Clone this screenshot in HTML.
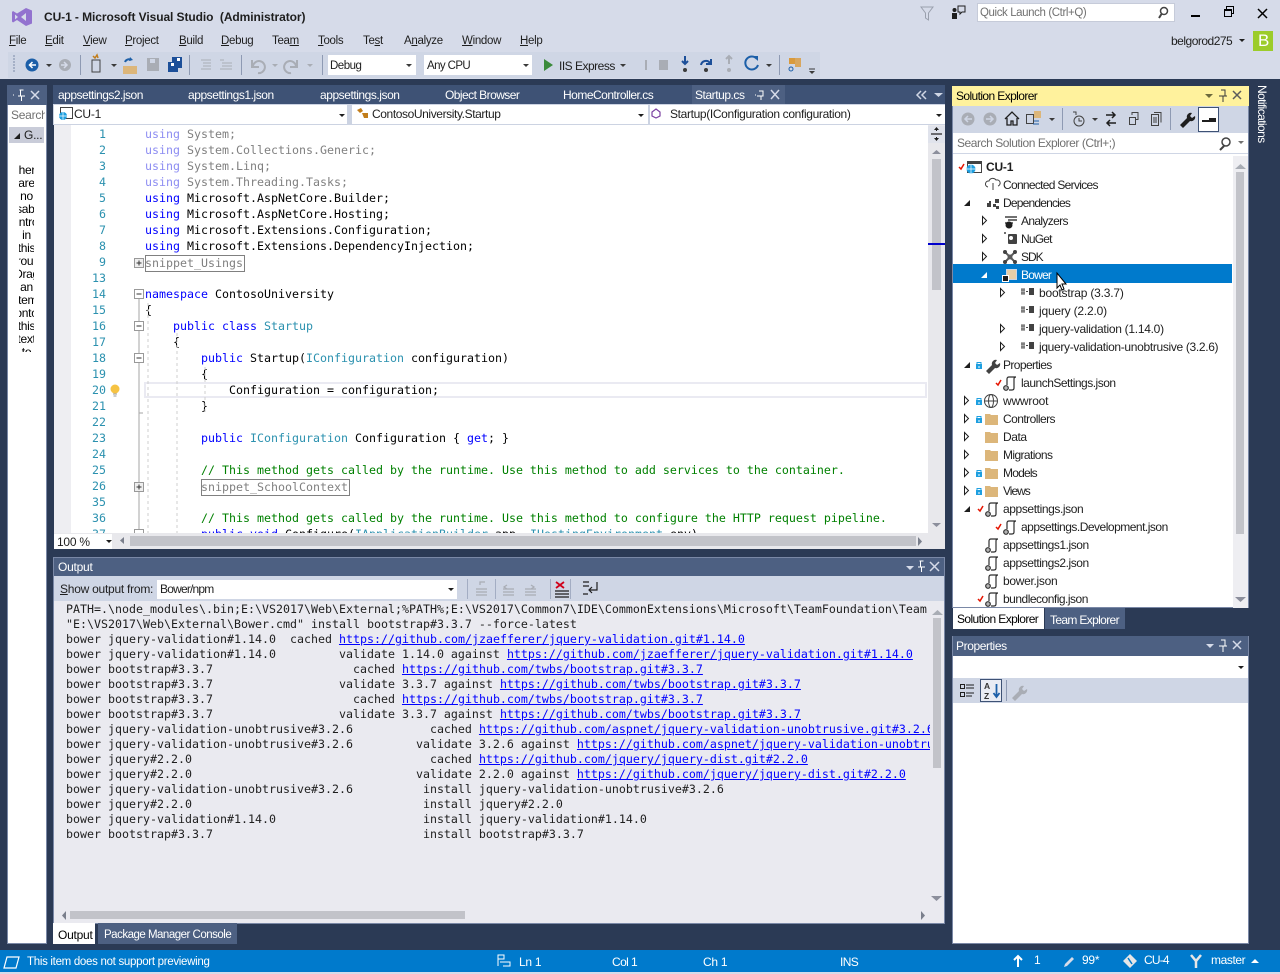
<!DOCTYPE html>
<html><head><meta charset="utf-8"><title>CU-1 - Microsoft Visual Studio</title>
<style>
html,body{margin:0;padding:0;width:1280px;height:974px;overflow:hidden;background:#2b3a55}
body{position:relative;font-family:"Liberation Sans",sans-serif;font-size:12px;color:#1e1e1e}
.b{position:absolute}
.t{position:absolute;white-space:pre;line-height:16px;letter-spacing:-.25px}
.m{position:absolute;white-space:pre;line-height:16px;font-size:11.5px;letter-spacing:-.3px;top:33px}
.w{color:#fff}
.c{position:absolute;left:91px;white-space:pre;font:11.63px/16px "DejaVu Sans Mono",monospace;color:#000}
.n{position:absolute;left:0;width:52px;text-align:right;font:11.63px/16px "DejaVu Sans Mono",monospace;color:#2b91af}
.k{color:#00f}.y{color:#2b91af}.g{color:#008000}
.fk{color:#8d8df2}.f{color:#808080}
#out{position:absolute;left:66px;top:602px;width:864px;height:300px;overflow:hidden;font:11.63px/15px "DejaVu Sans Mono",monospace;color:#1e1e1e;white-space:pre}
#out a{color:#00f;text-decoration:underline}
u{text-decoration:underline}
.r{position:absolute;white-space:pre;line-height:16px;letter-spacing:-.2px;color:#1e1e1e}
#lst{position:absolute;left:19px;top:164px;width:15px;height:188px;overflow:hidden}
#lst div{position:absolute;left:-23px;width:61px;text-align:center;line-height:13px;white-space:pre;font-size:12px;letter-spacing:-.3px;color:#000}
</style></head><body>

<!-- chrome -->
<div class="b" style="left:0;top:0;width:1280px;height:79px;background:#d6dbe9"></div>
<div class="b" style="left:8px;top:52px;width:812px;height:26px;background:#cfd6e5"></div>
<div class="b" style="left:977px;top:3px;width:198px;height:19px;background:#fff;border:1px solid #c6cbd9;box-sizing:border-box"></div>
<div class="b" style="left:1253px;top:31px;width:20px;height:20px;background:#9ccc2a"></div>
<div class="b" style="left:328px;top:55px;width:88px;height:20px;background:#fff"></div>
<div class="b" style="left:424px;top:55px;width:108px;height:20px;background:#fff"></div>

<!-- left panel -->
<div class="b" style="left:7px;top:85px;width:40px;height:859px;background:#fff;box-shadow:0 0 0 1px #7a88a6 inset"></div>
<div class="b" style="left:7px;top:85px;width:40px;height:20px;background:#4d6082"></div>
<div class="b" style="left:9px;top:127px;width:35px;height:16px;background:#c9ccd9"></div>

<!-- doc tabs -->
<div class="b" style="left:53px;top:85px;width:892px;height:19px;background:#3e5275"></div>
<div class="b" style="left:692px;top:85px;width:93px;height:19px;background:#4d6082"></div>
<div class="b" style="left:53px;top:104px;width:892px;height:21px;background:#ccd3e2"></div>
<div class="b" style="left:54px;top:105px;width:293px;height:19px;background:#fff"></div>
<div class="b" style="left:352px;top:105px;width:296px;height:19px;background:#fff"></div>
<div class="b" style="left:650px;top:105px;width:295px;height:19px;background:#fff"></div>

<!-- editor -->
<div class="b" style="left:54px;top:125px;width:891px;height:424px;background:#fff"></div>
<div class="b" style="left:54px;top:125px;width:17px;height:408px;background:#eeeef2"></div>
<div class="b" style="left:144px;top:382px;width:783px;height:16px;border:2px solid #eaeaf2;box-sizing:border-box"></div>
<div class="b" style="left:928px;top:125px;width:17px;height:408px;background:#e8e8ec"></div>
<div class="b" style="left:928px;top:126px;width:17px;height:17px;background:#e0e3ec"></div>
<div class="b" style="left:932px;top:159px;width:9px;height:131px;background:#c2c3c9"></div>
<div class="b" style="left:928px;top:243px;width:17px;height:2px;background:#00c"></div>

<div class="b" style="left:54px;top:125px;width:874px;height:408px;overflow:hidden">
<div class="n" style="top:1px">1</div><div class="n" style="top:17px">2</div><div class="n" style="top:33px">3</div><div class="n" style="top:49px">4</div><div class="n" style="top:65px">5</div><div class="n" style="top:81px">6</div><div class="n" style="top:97px">7</div><div class="n" style="top:113px">8</div><div class="n" style="top:129px">9</div><div class="n" style="top:145px">13</div><div class="n" style="top:161px">14</div><div class="n" style="top:177px">15</div><div class="n" style="top:193px">16</div><div class="n" style="top:209px">17</div><div class="n" style="top:225px">18</div><div class="n" style="top:241px">19</div><div class="n" style="top:257px">20</div><div class="n" style="top:273px">21</div><div class="n" style="top:289px">22</div><div class="n" style="top:305px">23</div><div class="n" style="top:321px">24</div><div class="n" style="top:337px">25</div><div class="n" style="top:353px">26</div><div class="n" style="top:369px">35</div><div class="n" style="top:385px">36</div><div class="n" style="top:401px">37</div>
<div class="c f" style="top:1px"><span class="fk">using</span> System;</div>
<div class="c f" style="top:17px"><span class="fk">using</span> System.Collections.Generic;</div>
<div class="c f" style="top:33px"><span class="fk">using</span> System.Linq;</div>
<div class="c f" style="top:49px"><span class="fk">using</span> System.Threading.Tasks;</div>
<div class="c" style="top:65px"><span class="k">using</span> Microsoft.AspNetCore.Builder;</div>
<div class="c" style="top:81px"><span class="k">using</span> Microsoft.AspNetCore.Hosting;</div>
<div class="c" style="top:97px"><span class="k">using</span> Microsoft.Extensions.Configuration;</div>
<div class="c" style="top:113px"><span class="k">using</span> Microsoft.Extensions.DependencyInjection;</div>
<div class="c f" style="top:130px">snippet_Usings</div>
<div class="c" style="top:161px"><span class="k">namespace</span> ContosoUniversity</div>
<div class="c" style="top:177px">{</div>
<div class="c" style="top:193px">    <span class="k">public</span> <span class="k">class</span> <span class="y">Startup</span></div>
<div class="c" style="top:209px">    {</div>
<div class="c" style="top:225px">        <span class="k">public</span> Startup(<span class="y">IConfiguration</span> configuration)</div>
<div class="c" style="top:241px">        {</div>
<div class="c" style="top:257px">            Configuration = configuration;</div>
<div class="c" style="top:273px">        }</div>
<div class="c" style="top:305px">        <span class="k">public</span> <span class="y">IConfiguration</span> Configuration { <span class="k">get</span>; }</div>
<div class="c g" style="top:337px">        // This method gets called by the runtime. Use this method to add services to the container.</div>
<div class="c f" style="top:354px">        snippet_SchoolContext</div>
<div class="c g" style="top:385px">        // This method gets called by the runtime. Use this method to configure the HTTP request pipeline.</div>
<div class="c" style="top:401px">        <span class="k">public</span> <span class="k">void</span> Configure(<span class="y">IApplicationBuilder</span> app, <span class="y">IHostingEnvironment</span> env)</div>
</div>
<div class="b" style="left:145px;top:255px;width:98px;height:15px;border:1px solid #808080"></div>
<div class="b" style="left:201px;top:479px;width:147px;height:15px;border:1px solid #808080"></div>

<!-- output -->
<div class="b" style="left:53px;top:557px;width:892px;height:367px;background:#eaeaf0;box-shadow:0 0 0 1px #7a88a6 inset"></div>
<div class="b" style="left:54px;top:558px;width:890px;height:18px;background:#4d6082"></div>
<div class="b" style="left:54px;top:576px;width:890px;height:25px;background:#cfd6e5"></div>
<div class="b" style="left:157px;top:580px;width:300px;height:19px;background:#fff"></div>
<div class="b" style="left:933px;top:618px;width:8px;height:150px;background:#c2c3c9"></div>
<div class="b" style="left:70px;top:911px;width:395px;height:8px;background:#c2c3c9"></div>
<div class="b" style="left:53px;top:923px;width:42px;height:21px;background:#fff"></div>
<div class="b" style="left:98px;top:923px;width:139px;height:21px;background:#4d6082"></div>
<div id="out">PATH=.\node_modules\.bin;E:\VS2017\Web\External;%PATH%;E:\VS2017\Common7\IDE\CommonExtensions\Microsoft\TeamFoundation\Team Explorer\Git\cmd
"E:\VS2017\Web\External\Bower.cmd" install bootstrap#3.3.7 --force-latest
bower jquery-validation#1.14.0  cached <a>https://github.com/jzaefferer/jquery-validation.git#1.14.0</a>
bower jquery-validation#1.14.0         validate 1.14.0 against <a>https://github.com/jzaefferer/jquery-validation.git#1.14.0</a>
bower bootstrap#3.3.7                    cached <a>https://github.com/twbs/bootstrap.git#3.3.7</a>
bower bootstrap#3.3.7                  validate 3.3.7 against <a>https://github.com/twbs/bootstrap.git#3.3.7</a>
bower bootstrap#3.3.7                    cached <a>https://github.com/twbs/bootstrap.git#3.3.7</a>
bower bootstrap#3.3.7                  validate 3.3.7 against <a>https://github.com/twbs/bootstrap.git#3.3.7</a>
bower jquery-validation-unobtrusive#3.2.6           cached <a>https://github.com/aspnet/jquery-validation-unobtrusive.git#3.2.6</a>
bower jquery-validation-unobtrusive#3.2.6         validate 3.2.6 against <a>https://github.com/aspnet/jquery-validation-unobtrusive.git#3.2.6</a>
bower jquery#2.2.0                                  cached <a>https://github.com/jquery/jquery-dist.git#2.2.0</a>
bower jquery#2.2.0                                validate 2.2.0 against <a>https://github.com/jquery/jquery-dist.git#2.2.0</a>
bower jquery-validation-unobtrusive#3.2.6          install jquery-validation-unobtrusive#3.2.6
bower jquery#2.2.0                                 install jquery#2.2.0
bower jquery-validation#1.14.0                     install jquery-validation#1.14.0
bower bootstrap#3.3.7                              install bootstrap#3.3.7</div>

<!-- editor bottom bar (above fold column) -->
<div class="b" style="left:54px;top:533px;width:891px;height:16px;background:#e8e8ec"></div>
<div class="b" style="left:54px;top:534px;width:58px;height:15px;background:#fff"></div>
<div class="b" style="left:130px;top:536px;width:786px;height:10px;background:#c2c3c9"></div>

<!-- solution explorer -->
<div class="b" style="left:952px;top:86px;width:297px;height:522px;background:#fff;box-shadow:0 0 0 1px #7a88a6 inset"></div>
<div class="b" style="left:952px;top:86px;width:297px;height:20px;background:#fff29d"></div>
<div class="b" style="left:953px;top:106px;width:295px;height:26px;background:#cfd6e5"></div>
<div class="b" style="left:1198px;top:107px;width:21px;height:25px;background:#fff;border:1px solid #3e5275;box-sizing:border-box"></div>
<div class="b" style="left:953px;top:132px;width:295px;height:1px;background:#cfd6e5"></div>
<div class="b" style="left:953px;top:133px;width:295px;height:20px;background:#fff;border-bottom:1px solid #cfd6e5"></div>
<div class="b" style="left:1233px;top:156px;width:15px;height:452px;background:#eeeef2"></div>
<div class="b" style="left:1236px;top:172px;width:8px;height:362px;background:#c2c3c9"></div>
<div class="b" style="left:953px;top:264px;width:279px;height:19px;background:#007acc"></div>
<div class="b" style="left:953px;top:608px;width:91px;height:21px;background:#fff"></div>
<div class="b" style="left:1045px;top:608px;width:80px;height:21px;background:#4d6082"></div>

<!-- properties -->
<div class="b" style="left:952px;top:636px;width:297px;height:308px;background:#fff;box-shadow:0 0 0 1px #7a88a6 inset"></div>
<div class="b" style="left:953px;top:636px;width:295px;height:20px;background:#4d6082"></div>
<div class="b" style="left:953px;top:678px;width:295px;height:25px;background:#cfd6e5"></div>
<div class="b" style="left:980px;top:679px;width:22px;height:23px;background:#e9ecf4;border:1px solid #3e5275;box-sizing:border-box"></div>

<!-- status -->
<div class="b" style="left:0;top:950px;width:1280px;height:22px;background:#007acc"></div>
<div class="b" style="left:0;top:972px;width:1280px;height:2px;background:#d6dbe9"></div>

<!-- title & menu text -->
<div class="t" style="left:44px;top:9px;font-weight:bold;color:#1e1e1e;font-size:12px;letter-spacing:-.08px">CU-1 - Microsoft Visual Studio  (Administrator)</div>
<div class="m" style="left:9px"><u>F</u>ile</div>
<div class="m" style="left:45px"><u>E</u>dit</div>
<div class="m" style="left:83px"><u>V</u>iew</div>
<div class="m" style="left:125px"><u>P</u>roject</div>
<div class="m" style="left:179px"><u>B</u>uild</div>
<div class="m" style="left:221px"><u>D</u>ebug</div>
<div class="m" style="left:272px">Tea<u>m</u></div>
<div class="m" style="left:318px"><u>T</u>ools</div>
<div class="m" style="left:363px">Te<u>s</u>t</div>
<div class="m" style="left:404px">A<u>n</u>alyze</div>
<div class="m" style="left:462px"><u>W</u>indow</div>
<div class="m" style="left:520px"><u>H</u>elp</div>
<div class="t" style="left:980px;top:5px;color:#717171;font-size:11.5px;letter-spacing:-.4px">Quick Launch (Ctrl+Q)</div>
<div class="t" style="left:1171px;top:33px;letter-spacing:-.5px">belgorod275</div>
<div class="t w" style="left:1258px;top:31px;font-size:17px;line-height:20px">B</div>
<div class="t" style="left:330px;top:58px;font-size:11.5px;letter-spacing:-.5px">Debug</div>
<div class="t" style="left:427px;top:58px;font-size:11.5px;letter-spacing:-.6px">Any CPU</div>
<div class="t" style="left:559px;top:58px;letter-spacing:-.5px">IIS Express</div>

<!-- left panel text -->
<div class="t" style="left:11px;top:107px;color:#717171;width:34px;overflow:hidden">Search</div>
<div class="t" style="left:24px;top:127px;color:#1e1e1e">G...</div>
<div id="lst">
<div style="top:0">There</div><div style="top:13px">are</div><div style="top:26px">no</div><div style="top:39px">usable</div><div style="top:52px">controls</div><div style="top:65px">in</div><div style="top:78px">this</div><div style="top:91px">group.</div><div style="top:104px">Drag</div><div style="top:117px">an</div><div style="top:130px">item</div><div style="top:143px">onto</div><div style="top:156px">this</div><div style="top:169px">text</div><div style="top:182px">to</div>
</div>

<!-- tabs text -->
<div class="t w" style="left:58px;top:87px;letter-spacing:-.5px">appsettings2.json</div>
<div class="t w" style="left:188px;top:87px;letter-spacing:-.45px">appsettings1.json</div>
<div class="t w" style="left:320px;top:87px;letter-spacing:-.45px">appsettings.json</div>
<div class="t w" style="left:445px;top:87px;letter-spacing:-.55px">Object Browser</div>
<div class="t w" style="left:563px;top:87px;letter-spacing:-.5px">HomeController.cs</div>
<div class="t w" style="left:695px;top:87px;letter-spacing:-.45px">Startup.cs</div>
<div class="t" style="left:74px;top:106px">CU-1</div>
<div class="t" style="left:372px;top:106px;letter-spacing:-.4px">ContosoUniversity.Startup</div>
<div class="t" style="left:670px;top:106px;letter-spacing:-.35px">Startup(IConfiguration configuration)</div>
<div class="t" style="left:57px;top:534px">100 %</div>

<!-- output chrome text -->
<div class="t w" style="left:58px;top:559px">Output</div>
<div class="t" style="left:60px;top:581px"><u>S</u>how output from:</div>
<div class="t" style="left:160px;top:581px;letter-spacing:-.8px">Bower/npm</div>
<div class="t" style="left:58px;top:927px;color:#000">Output</div>
<div class="t w" style="left:104px;top:927px;font-size:11.5px;letter-spacing:-.5px">Package Manager Console</div>

<!-- solution explorer text -->
<div class="t" style="left:956px;top:88px;color:#000;letter-spacing:-.6px">Solution Explorer</div>
<div class="t" style="left:957px;top:135px;color:#717171;letter-spacing:-.45px">Search Solution Explorer (Ctrl+;)</div>
<div class="r" style="left:986px;top:159px;font-weight:bold">CU-1</div>
<div class="r" style="left:1003px;top:177px;letter-spacing:-.7px">Connected Services</div>
<div class="r" style="left:1003px;top:195px;letter-spacing:-.8px">Dependencies</div>
<div class="r" style="left:1021px;top:213px;letter-spacing:-.65px">Analyzers</div>
<div class="r" style="left:1021px;top:231px;letter-spacing:-.8px">NuGet</div>
<div class="r" style="left:1021px;top:249px;letter-spacing:-1px">SDK</div>
<div class="r" style="left:1021px;top:267px;color:#fff;letter-spacing:-.8px">Bower</div>
<div class="r" style="left:1039px;top:285px">bootstrap (3.3.7)</div>
<div class="r" style="left:1039px;top:303px">jquery (2.2.0)</div>
<div class="r" style="left:1039px;top:321px;letter-spacing:-.28px">jquery-validation (1.14.0)</div>
<div class="r" style="left:1039px;top:339px;letter-spacing:-.33px">jquery-validation-unobtrusive (3.2.6)</div>
<div class="r" style="left:1003px;top:357px;letter-spacing:-.6px">Properties</div>
<div class="r" style="left:1021px;top:375px;letter-spacing:-.5px">launchSettings.json</div>
<div class="r" style="left:1003px;top:393px">wwwroot</div>
<div class="r" style="left:1003px;top:411px;letter-spacing:-.55px">Controllers</div>
<div class="r" style="left:1003px;top:429px;letter-spacing:-.45px">Data</div>
<div class="r" style="left:1003px;top:447px;letter-spacing:-.6px">Migrations</div>
<div class="r" style="left:1003px;top:465px;letter-spacing:-.8px">Models</div>
<div class="r" style="left:1003px;top:483px;letter-spacing:-1px">Views</div>
<div class="r" style="left:1003px;top:501px;letter-spacing:-.4px">appsettings.json</div>
<div class="r" style="left:1021px;top:519px;letter-spacing:-.5px">appsettings.Development.json</div>
<div class="r" style="left:1003px;top:537px;letter-spacing:-.45px">appsettings1.json</div>
<div class="r" style="left:1003px;top:555px;letter-spacing:-.45px">appsettings2.json</div>
<div class="r" style="left:1003px;top:573px;letter-spacing:-.3px">bower.json</div>
<div class="r" style="left:1003px;top:591px;letter-spacing:-.5px">bundleconfig.json</div>
<div class="t" style="left:957px;top:611px;color:#000;letter-spacing:-.6px">Solution Explorer</div>
<div class="t w" style="left:1050px;top:612px;letter-spacing:-.65px">Team Explorer</div>
<div class="t w" style="left:956px;top:638px;letter-spacing:-.4px">Properties</div>

<!-- notifications -->
<div class="b w" style="left:1254px;top:85px;writing-mode:vertical-rl;white-space:pre;line-height:16px;letter-spacing:-.6px">Notifications</div>

<!-- status text -->
<div class="t w" style="left:27px;top:954px;font-size:11.5px;letter-spacing:-.3px">This item does not support previewing</div>
<div class="t w" style="left:519px;top:954px">Ln 1</div>
<div class="t w" style="left:612px;top:954px;letter-spacing:-.6px">Col 1</div>
<div class="t w" style="left:703px;top:954px">Ch 1</div>
<div class="t w" style="left:840px;top:954px;letter-spacing:-.6px">INS</div>
<div class="t w" style="left:1034px;top:952px">1</div>
<div class="t w" style="left:1082px;top:952px">99*</div>
<div class="t w" style="left:1144px;top:952px;letter-spacing:-.8px">CU-4</div>
<div class="t w" style="left:1211px;top:952px;letter-spacing:-.4px">master</div>

<!-- icon overlay -->
<svg class="b" style="left:0;top:0" width="1280" height="974" viewBox="0 0 1280 974" fill="none">
<defs>
<g id="fo"><path d="M0 2h5l1 1h7v10H0z" fill="#dcb67a"/></g>
<g id="js" stroke="#2e2e2e" stroke-width="1.2"><path d="M4 9V3q0-2 2-2h7q-2 0-2 2v9q0 2-2 2H6"/><circle cx="3" cy="12" r="2.300" fill="#b5b5b5"/></g>
<g id="lk"><rect x="0" y="3" width="6" height="5" fill="#1e9fe0"/><path d="M1 3V1.500h4V3" stroke="#1e9fe0"/><rect x="2.500" y="5" width="1" height="2" fill="#fff"/></g>
<path id="ck" d="M0 3l2 2 3-5" stroke="#e51400" stroke-width="1.500"/>
<path id="tr" d="M.5 .5v8l4-4z" stroke="#1e1e1e"/>
<path id="td" d="M6 0v6H0z" fill="#1e1e1e"/>
<g id="pk" fill="#424242"><path d="M1 0v7M3 0v7M0 2h4M0 5h4" stroke="#555"/><rect x="5" y="3" width="2" height="1"/><rect x="8" y="0" width="5" height="7"/></g>
<path id="dn" d="M0 0h6l-3 3z"/>
</defs>

<!-- VS logo -->
<path d="M13 11l4 2.500 9-5.500 6 2.500v13L26 26l-9-6-4 2.500-1-1V12z" fill="#9272cf"/><path d="M15 14.500l3 2.500-3 2.500zM26 13v8l-5-4z" fill="#d6dbe9"/>

<!-- window controls -->
<path d="M921 7h12l-4.500 6v7l-3-2v-5z" stroke="#9aa0ad"/>
<rect x="952" y="13" width="5" height="6" fill="#1e1e1e"/><circle cx="954.500" cy="10" r="2" fill="#1e1e1e"/><path d="M958 6h7v6h-3l-2 2v-2h-2z" stroke="#1e1e1e"/>
<circle cx="1164" cy="11" r="3.500" stroke="#424242" stroke-width="1.500"/><path d="M1161.500 14l-2.500 4" stroke="#424242" stroke-width="2"/>
<rect x="1191" y="15" width="9" height="2" fill="#000"/>
<path d="M1224.500 16.500h7v-7h-7zM1226.500 9v-2.500h7v7h-2" stroke="#000"/><rect x="1224" y="9" width="8" height="2" fill="#000"/>
<path d="M1258 9l9 9M1267 9l-9 9" stroke="#000" stroke-width="1.500"/>
<use href="#dn" x="1239" y="39" fill="#1e1e1e"/>

<!-- toolbar icons -->
<path d="M13 56h2M13 59h2M13 62h2M13 65h2M13 68h2M13 71h2" stroke="#7b8aa6"/>
<circle cx="32" cy="65" r="6.500" fill="#1c5fa8"/><path d="M36 65h-6M32.500 62l-3 3 3 3" stroke="#fff" stroke-width="1.500"/>
<use href="#dn" x="46" y="64" fill="#3a3a3a"/>
<circle cx="65" cy="65" r="6" fill="#a9adb5"/><path d="M61 65h6M64 62l3 3-3 3" stroke="#d6dbe9" stroke-width="1.500"/>
<path d="M80.500 55v20M189.500 55v20M241.500 55v20M322.500 55v20M779.500 55v20" stroke="#8e9ab3"/>
<path d="M92 60h8v12h-8z" stroke="#424242"/><path d="M93 56l2 2 2-3 1 3" stroke="#c27d1a" stroke-width="1.500"/>
<use href="#dn" x="111" y="64" fill="#3a3a3a"/>
<path d="M123 66h14v8h-14z" fill="#dcb67a"/><path d="M125 62a4 4 0 0 1 6-2" stroke="#1c5fa8" stroke-width="2"/><path d="M130 57l3 3-4 1z" fill="#1c5fa8"/>
<path d="M147 58h12v13h-12z" fill="#a9adb5"/><rect x="150" y="59" width="5" height="4" fill="#cfd6e5"/>
<path d="M168 62h10v10h-10z" fill="#1c4f99"/><path d="M172 57h10v11h-4v-6h-6z" fill="#1c4f99"/><rect x="171" y="63" width="3" height="3" fill="#fff"/><rect x="177" y="58" width="3" height="3" fill="#fff"/>
<path d="M201 60h10M203 63h8M203 66h8M201 69h10" stroke="#a9adb5"/>
<path d="M220 60h4M222 63h10M222 66h10M220 69h12" stroke="#a9adb5"/>
<path d="M252 60v7h7M253 66a6 6 0 1 1 5 7" stroke="#a9adb5" stroke-width="2"/>
<use href="#dn" x="272" y="64" fill="#a9adb5"/>
<path d="M297 60v7h-7M296 66a6 6 0 1 0-5 7" stroke="#a9adb5" stroke-width="2"/>
<use href="#dn" x="307" y="64" fill="#a9adb5"/>
<use href="#dn" x="406" y="64" fill="#3a3a3a"/>
<use href="#dn" x="523" y="64" fill="#3a3a3a"/>
<path d="M544 59l9 6-9 6z" fill="#3a8a3a"/>
<use href="#dn" x="620" y="64" fill="#3a3a3a"/>
<rect x="645" y="60" width="2" height="10" fill="#a9adb5"/>
<rect x="659" y="60" width="9" height="10" fill="#a9adb5"/>
<path d="M685 56v8M682 61l3 3 3-3" stroke="#1c4f99" stroke-width="2"/><circle cx="685" cy="70" r="2" fill="#3a3a3a"/>
<path d="M701 65a5 5 0 0 1 9-2M711 59v5h-5" stroke="#1c4f99" stroke-width="2"/><circle cx="706" cy="70" r="2" fill="#3a3a3a"/>
<path d="M729 64v-8M726 59l3-3 3 3" stroke="#a9adb5" stroke-width="2"/><circle cx="729" cy="70" r="2" fill="#a9adb5"/>
<path d="M757 59a6.500 6.500 0 1 0 1 6" stroke="#1c5fa8" stroke-width="2"/><path d="M753 56h5v5z" fill="#1c5fa8"/>
<use href="#dn" x="766" y="64" fill="#3a3a3a"/>
<rect x="789" y="58" width="6" height="6" fill="#d99a3c"/><rect x="795" y="58" width="6" height="9" fill="#d99a3c" opacity=".8"/><circle cx="791" cy="69" r="2" stroke="#1c5fa8"/>
<path d="M809 69h6" stroke="#3a3a3a"/><use href="#dn" x="809" y="71" fill="#3a3a3a"/>

<!-- left panel icons -->
<path d="M13 95h1M19.500 90h4M20.500 90v6M18 96h7M21.500 96v5" stroke="#fff"/>
<path d="M31 91l8 8M39 91l-8 8" stroke="#d6dbe9" stroke-width="1.500"/>
<use href="#td" x="14" y="133" />

<!-- tab icons -->
<path d="M755 95h1M759 91h4v5h-4M757 96h2M761 96v4" stroke="#fff"/>
<path d="M771 90l8 9M779 90l-8 9" stroke="#d6dbe9" stroke-width="1.500"/>
<path d="M921 91l-4 4 4 4M926 91l-4 4 4 4" stroke="#cfd6e5" stroke-width="1.500"/>
<path d="M934 93h9l-4.500 4z" fill="#cfd6e5"/>
<rect x="60.500" y="107.500" width="12" height="11" stroke="#424242"/><circle cx="63" cy="116" r="4" fill="#1e9fe0"/><path d="M59 116h8M63 112v8" stroke="#fff" stroke-width=".7"/>
<path d="M357 110l4-2 2 3-3 2zM362 113h6v5h-4z" fill="#c27d1a"/>
<path d="M656 109l4 3v4l-4 2-4-2v-4z" stroke="#7a3fa0" stroke-width="1.200"/>
<use href="#dn" x="339" y="114" fill="#1e1e1e"/><use href="#dn" x="638" y="114" fill="#1e1e1e"/><use href="#dn" x="936" y="114" fill="#1e1e1e"/>

<!-- editor scrollbar / margin -->
<path d="M931 134h11" stroke="#1e1e1e" stroke-width="1.200"/><path d="M936.500 128v3M936.500 137v3" stroke="#1e1e1e"/><path d="M934 130h5l-2.500-3zM934 138h5l-2.500 3z" fill="#1e1e1e"/>
<path d="M932 154h9l-4.500-4z" fill="#8c8f9c"/>
<path d="M932 523h9l-4.500 4z" fill="#8c8f9c"/>
<path d="M139 299v234" stroke="#a5a5a5"/><path d="M139 413h4" stroke="#a5a5a5"/>
<path d="M148 303v230M177 333v200M205 367v48" stroke="#cfcfcf" stroke-dasharray="3 3"/>
<rect x="134.500" y="258.500" width="9" height="9" fill="#eee" stroke="#999"/><path d="M136.500 263h5M139 260.500v5" stroke="#333"/>
<rect x="134.500" y="289.500" width="9" height="9" fill="#fff" stroke="#999"/><path d="M136.500 294h5" stroke="#333"/>
<rect x="134.500" y="321.500" width="9" height="9" fill="#fff" stroke="#999"/><path d="M136.500 326h5" stroke="#333"/>
<rect x="134.500" y="353.500" width="9" height="9" fill="#fff" stroke="#999"/><path d="M136.500 358h5" stroke="#333"/>
<rect x="134.500" y="482.500" width="9" height="9" fill="#eee" stroke="#999"/><path d="M136.500 487h5M139 484.500v5" stroke="#333"/>
<path d="M134.500 533v-3.500h9v3.500" fill="#fff" stroke="#999"/>
<circle cx="115" cy="389" r="4.500" fill="#f6c343"/><path d="M113 394h4M113.500 396h3" stroke="#9a9a9a"/>
<!-- editor hscroll -->
<use href="#dn" x="106" y="540" fill="#1e1e1e"/>
<path d="M124 537v7l-4-3.500z" fill="#7a7f8c"/>
<path d="M918 537v9l4-4.500z" fill="#7a7f8c"/>

<!-- output icons -->
<path d="M906 566h8l-4 4z" fill="#d6dbe9"/>
<path d="M919.500 561h4M920.500 561v6M918 567h7M921.500 567v5" stroke="#fff"/>
<path d="M930 562l9 9M939 562l-9 9" stroke="#d6dbe9" stroke-width="1.500"/>
<use href="#dn" x="448" y="588" fill="#1e1e1e"/>
<path d="M467.500 579v20M495.500 579v20M550.500 579v20M570.500 579v20" stroke="#a3adc3"/>
<path d="M476 589h11M476 592h11M476 595h11M480 585v-3h5" stroke="#a9adb5" stroke-width="1.300"/>
<path d="M503 589h11M503 592h11M503 595h11M507 585l-3 2 3 2" stroke="#a9adb5" stroke-width="1.300"/>
<path d="M525 589h11M525 592h11M525 595h11M531 585l3 2-3 2" stroke="#a9adb5" stroke-width="1.300"/>
<path d="M556 582l8 6M564 582l-8 6" stroke="#d0021b" stroke-width="1.800"/><path d="M555 591h14M555 594h14M555 597h14" stroke="#1e1e1e" stroke-width="1.200"/>
<path d="M583 582h6M583 586h6M583 594h5M597 582v8h-7M592 587l-3 3 3 3" stroke="#1e1e1e" stroke-width="1.200"/>
<path d="M932 615h11l-5.500-5z" fill="#a9adb5"/>
<path d="M931 896h11l-5.500 5z" fill="#8c8f9c"/>
<path d="M66 911v9l-4-4.500z" fill="#7a7f8c"/>
<path d="M921 911v9l4-4.500z" fill="#7a7f8c"/>

<!-- solution explorer toolbar -->
<path d="M1205 94h8l-4 4z" fill="#6d6a3c"/>
<path d="M1221 90h4v6h-4M1219 96h8M1223 96v6" stroke="#3a3a3a"/>
<path d="M1233 91l8 8M1241 91l-8 8" stroke="#5c5c5c" stroke-width="1.500"/>
<circle cx="968" cy="119" r="6.500" fill="#a9adb5"/><path d="M972 119h-6M968 116l-3 3 3 3" stroke="#cfd6e5" stroke-width="1.500"/>
<circle cx="990" cy="119" r="6.500" fill="#a9adb5"/><path d="M986 119h6M990 116l3 3-3 3" stroke="#cfd6e5" stroke-width="1.500"/>
<path d="M1005 119l7-7 7 7M1007 118v7h4v-4h2v4h4v-7" stroke="#1e1e1e" stroke-width="1.300"/>
<rect x="1026.500" y="114.500" width="7" height="9" stroke="#424242"/><rect x="1034" y="111" width="7" height="7" fill="#dcb67a"/><path d="M1034 121h5M1039 124h-6" stroke="#1c5fa8"/>
<use href="#dn" x="1049" y="118" fill="#3a3a3a"/>
<path d="M1062.500 108v22M1170.500 108v22" stroke="#8e9ab3"/>
<circle cx="1079" cy="121" r="5" stroke="#424242"/><path d="M1079 118v3h3M1073 112h3v3" stroke="#424242"/>
<use href="#dn" x="1092" y="118" fill="#3a3a3a"/>
<path d="M1106 115h9M1112 112l3 3-3 3" stroke="#1e1e1e" stroke-width="1.500"/><path d="M1116 123h-9M1110 120l-3 3 3 3" stroke="#1e1e1e" stroke-width="1.500"/>
<path d="M1129.500 117.500h6v7h-6zM1132 115v-2.500h6v7h-2" stroke="#424242"/>
<path d="M1151.500 114.500h7v11h-7zM1154 112.500h7v10" stroke="#424242"/><path d="M1153 118h4M1153 120h4M1153 122h4" stroke="#424242"/>
<path d="M1180 125l7-7a4 4 0 0 1 5-5l-2 3 2 2 3-2a4 4 0 0 1-5 5l-7 7z" fill="#1e1e1e"/>
<rect x="1202" y="120" width="14" height="2" fill="#1e1e1e"/><rect x="1209" y="118" width="7" height="2" fill="#1e1e1e"/>
<circle cx="1226" cy="142" r="4" stroke="#424242" stroke-width="1.500"/><path d="M1224 146l-4 4" stroke="#424242" stroke-width="2"/>
<use href="#dn" x="1238" y="141" fill="#717171"/>

<!-- tree icons -->
<use href="#ck" x="959" y="164"/><rect x="967.500" y="161.500" width="14" height="11" stroke="#424242"/><path d="M967 163h15" stroke="#424242" stroke-width="2"/><circle cx="971" cy="169" r="4.500" fill="#1e9fe0"/><path d="M966.500 169h9M971 164.500v9" stroke="#fff" stroke-width=".7"/>
<path d="M988 187a3 3 0 0 1 1-6 4 4 0 0 1 7-1 3 3 0 0 1 2 6M993 183v7" stroke="#424242"/>
<use href="#td" x="964" y="200"/>
<g fill="#424242"><rect x="987" y="203" width="4" height="4"/><rect x="993" y="204" width="3" height="3"/><rect x="995" y="199" width="4" height="4"/><rect x="989" y="201" width="2" height="2"/><rect x="996" y="206" width="3" height="3"/></g>
<use href="#tr" x="982" y="216"/>
<path d="M1005 217h12M1008 220h9M1005 223h8" stroke="#424242" stroke-width="1.500"/><circle cx="1009" cy="225" r="3.500" fill="#1e1e1e"/>
<use href="#tr" x="982" y="234"/>
<rect x="1008" y="234" width="9" height="10" rx="1" fill="#424242"/><circle cx="1005" cy="233" r="1" fill="#424242"/><circle cx="1011" cy="238" r="2" fill="#fff"/>
<use href="#tr" x="982" y="252"/>
<path d="M1004 251l12 12M1016 251l-12 12" stroke="#5a5a5a" stroke-width="2"/><circle cx="1010" cy="257" r="2.500" fill="#5a5a5a"/><circle cx="1005" cy="252" r="2" fill="#424242"/><circle cx="1015" cy="262" r="2" fill="#424242"/><circle cx="1005" cy="262" r="2" fill="#424242"/><circle cx="1015" cy="252" r="2" fill="#424242"/>
<path d="M987 278v-6l-6 6z" fill="#fff"/>
<path d="M1006.500 269.500h10v10h-10z" fill="#e6cfa8" stroke="#c9d6e6"/><rect x="1002.500" y="275.500" width="6" height="6" fill="#1e1e1e" stroke="#fff"/>
<path d="M1057 273v15l3-3 2 5 2-1-2-5h4z" fill="#fff" stroke="#000"/>
<use href="#tr" x="1000" y="288"/><use href="#pk" x="1021" y="288"/>
<use href="#pk" x="1021" y="306"/>
<use href="#tr" x="1000" y="324"/><use href="#pk" x="1021" y="324"/>
<use href="#tr" x="1000" y="342"/><use href="#pk" x="1021" y="342"/>
<use href="#td" x="964" y="362"/><use href="#lk" x="976" y="361"/>
<path d="M986 371l6-6a4 4 0 0 1 5-5l-2 3 2 2 3-2a4 4 0 0 1-5 5l-6 6z" fill="#424242"/>
<use href="#ck" x="996" y="380"/><use href="#js" x="1003" y="376"/>
<use href="#tr" x="964" y="396"/><use href="#lk" x="976" y="397"/>
<circle cx="991" cy="401" r="6.500" stroke="#424242"/><ellipse cx="991" cy="401" rx="2.500" ry="6.500" stroke="#424242"/><path d="M984.500 401h13" stroke="#424242"/>
<use href="#tr" x="964" y="414"/><use href="#lk" x="976" y="415"/><use href="#fo" x="985" y="412"/>
<use href="#tr" x="964" y="432"/><use href="#fo" x="985" y="430"/>
<use href="#tr" x="964" y="450"/><use href="#fo" x="985" y="448"/>
<use href="#tr" x="964" y="468"/><use href="#lk" x="976" y="469"/><use href="#fo" x="985" y="466"/>
<use href="#tr" x="964" y="486"/><use href="#lk" x="976" y="487"/><use href="#fo" x="985" y="484"/>
<use href="#td" x="964" y="506"/><use href="#ck" x="978" y="506"/><use href="#js" x="985" y="502"/>
<use href="#ck" x="996" y="524"/><use href="#js" x="1003" y="520"/>
<use href="#js" x="985" y="538"/>
<use href="#js" x="985" y="556"/>
<use href="#js" x="985" y="574"/>
<use href="#ck" x="978" y="596"/><use href="#js" x="985" y="592"/>
<path d="M1235 169h11l-5.500-5z" fill="#a9adb5"/>
<path d="M1235 597h11l-5.500 5z" fill="#8c8f9c"/>

<!-- properties icons -->
<path d="M1206 644h8l-4 4z" fill="#d6dbe9"/>
<path d="M1221 640h4v6h-4M1219 646h8M1223 646v6" stroke="#fff"/>
<path d="M1233 641l8 8M1241 641l-8 8" stroke="#d6dbe9" stroke-width="1.500"/>
<use href="#dn" x="1238" y="666" fill="#1e1e1e"/>
<path d="M960.500 684.500h4v4h-4zM960.500 692.500h4v4h-4zM966 685h8M966 688h8M966 693h8M966 696h6" stroke="#1e1e1e"/>
<text x="984" y="689" font-family="Liberation Sans" font-size="8.500" font-weight="bold" fill="#333">A</text><text x="984" y="699" font-family="Liberation Sans" font-size="8.500" font-weight="bold" fill="#333">Z</text><path d="M996.500 684v13M993.500 693l3 4 3-4" stroke="#1c5fa8" stroke-width="1.800"/>
<path d="M1006.500 680v21" stroke="#8e9ab3"/>
<path d="M1012 698l7-7a4 4 0 0 1 5-5l-2 3 2 2 3-2a4 4 0 0 1-5 5l-7 7z" fill="#a9adb5"/>

<!-- status icons -->
<path d="M7 957h12l-3 11H4z" stroke="#fff" stroke-width="1.200"/>
<path d="M498 955h6v4h-6zM498 955v11M500 962h10v4h-7" stroke="#fff"/>
<path d="M1018 967v-11M1014 960l4-4 4 4" stroke="#fff" stroke-width="2"/>
<path d="M1064 967l1-3 7-7 2 2-7 7z" fill="#d6dbe9"/>
<path d="M1130 954l7 7-7 7-7-7z" fill="#e6e6e6"/><path d="M1128 958l4 6" stroke="#007acc" stroke-width="1.500"/>
<path d="M1191 955l5 6 5-6M1196 961v7" stroke="#e6e6e6" stroke-width="2.500"/>
<path d="M1251 963h8l-4-4z" fill="#fff"/>
</svg>
</body></html>
